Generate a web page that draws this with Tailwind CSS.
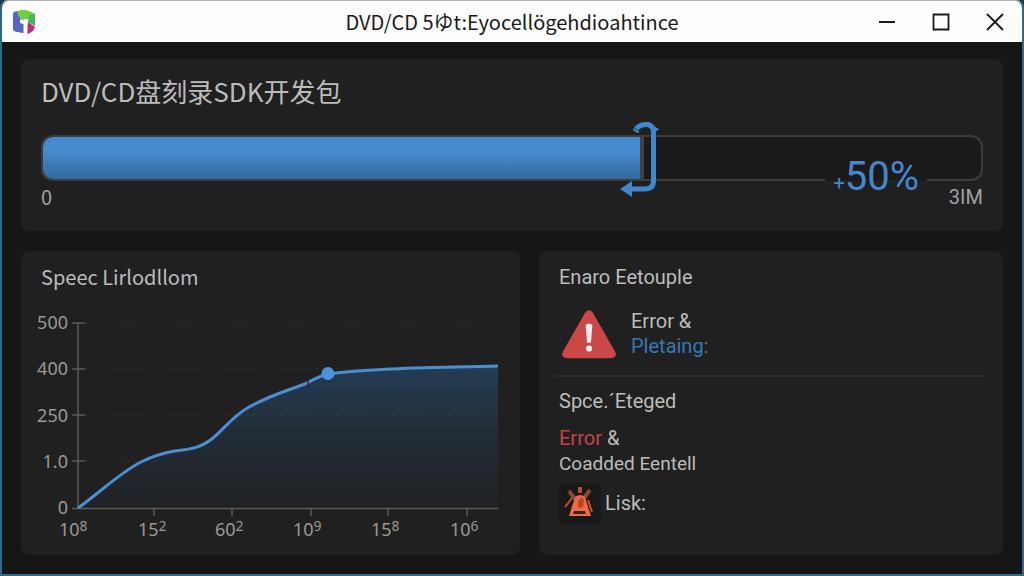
<!DOCTYPE html>
<html lang="zh-CN">
<head>
<meta charset="utf-8">
<meta name="viewport" content="width=device-width, initial-scale=1">
<title>DVD/CD SDK</title>
<script src="https://cdn.jsdelivr.net/npm/@tailwindcss/browser@4"></script>
</head>
<body class="bg-[#1c3c4c] font-['Noto_Sans_CJK_SC',sans-serif] text-[#bcbcbc]">
<div class="flex min-h-screen flex-col overflow-hidden rounded-t-lg border-x-2 border-t border-b-2 border-[#2e6a8c] border-t-[#a9b3b8] bg-[#161616]">
  <header class="relative flex h-[41px] shrink-0 items-center justify-between bg-[#fdfdfd] pl-2.5 text-[#1a1a1a]">
    <svg class="size-6" viewBox="0 0 24 24" aria-hidden="true">
      <path d="M3 1.500L9 .5l4 12v11L3 21.500Q1 20.500 1 19V4Q1 2 3 1.500Z" fill="#5a62c4"/>
      <path d="M5 1.500Q12-1 17 1L23 4v12l-7-7H8Z" fill="#6cd03a"/>
      <path d="M17 5l6-1v12l-7-4Z" fill="#48b45c"/>
      <path d="M16 12l7 5-2 4-5 3h-3Z" fill="#c02a7c"/>
      <path d="M8 9.500h7.500V24L11.500 24V14L8 13Z" fill="#fff"/>
    </svg>
    <h1 class="absolute inset-x-0 text-center text-[20px] leading-[40px]">DVD/CD 5ゆt:Eyocellögehdioahtince</h1>
    <div class="relative flex items-center">
      <button type="button" aria-label="Minimize" class="flex h-10 w-[54px] items-center justify-center"><svg class="size-5" viewBox="0 0 20 20" fill="none" stroke="currentColor" stroke-width="2"><path d="M2 10h16"/></svg></button>
      <button type="button" aria-label="Maximize" class="flex h-10 w-[54px] items-center justify-center"><svg class="size-5" viewBox="0 0 20 20" fill="none" stroke="currentColor" stroke-width="1.800"><path d="M2.500 2.500h15v15h-15z"/></svg></button>
      <button type="button" aria-label="Close" class="flex h-10 w-[54px] items-center justify-center"><svg class="size-5" viewBox="0 0 20 20" fill="none" stroke="currentColor" stroke-width="1.800"><path d="M2 2l16 16M18 2L2 18"/></svg></button>
    </div>
  </header>

  <main class="flex grow flex-col gap-5 px-[19px] pt-[17px] pb-[19px]">
    <section class="rounded-lg bg-[#202020] px-5 pt-4 pb-5">
      <h2 class="text-[26px] leading-8">DVD/CD盘刻录SDK开发包</h2>
      <div class="relative mt-7">
        <div role="progressbar" aria-label="Progress" aria-valuenow="50" aria-valuemin="0" aria-valuemax="100" class="flex h-[46px] overflow-hidden rounded-xl border-2 border-[#3c3c3c] bg-[#1a1a1a]">
          <div class="border-r-4 border-[#45423e] bg-linear-to-b from-[#468acf] from-35% to-[#34689f]" style="width:64.1%"></div>
        </div>
        <svg class="absolute -top-3.5 left-[61.500%] h-[78px] w-10" viewBox="0 0 40 78" aria-hidden="true">
          <path d="M16 8Q20 3.500 26 3.500h2Q33 5 33.500 10v50q0 8-9 8H12" fill="none" stroke="#4088cb" stroke-width="5"/>
          <path d="M13 7l7 4-3 1-4-3ZM30 3l9 5-5 4Z" fill="#4088cb"/>
          <path d="M0 68l12-8v16Z" fill="#4088cb"/>
        </svg>
        <div class="absolute top-6 right-14 flex items-baseline bg-linear-to-b from-[#1a1a1a] from-50% to-[#202020] to-50% px-2 font-['Roboto',sans-serif] text-[#4686cc]">
          <span class="text-[20px] leading-9">+</span><span class="text-[40px] leading-9">50%</span>
        </div>
      </div>
      <div class="mt-0.5 flex justify-between text-[20px] leading-7 text-[#a2a2a2]">
        <span>0</span><span class="font-['Roboto',sans-serif]">3IM</span>
      </div>
    </section>

    <div class="grid grow grid-cols-[499fr_464fr] gap-[19px]">
      <section class="rounded-lg bg-[#202020] px-4 pt-2.5">
        <h2 class="px-1 text-[20px] leading-8">Speec Lirlodllom</h2>
        <svg class="mt-4 w-full" viewBox="0 0 467 236" role="img" aria-label="Speed chart">
          <defs><linearGradient id="area" x1="0" y1="0" x2="0" y2="1"><stop offset="0" stop-color="#243c53"/><stop offset=".5" stop-color="#222c36"/><stop offset="1" stop-color="#202123"/></linearGradient></defs>
          <path d="M41 199C62 184 84 163 104 153C116 147 126 144 138 142C154 140 164 139 176 129C188 119 196 107 212 98C232 87 246 83 268 75C274 72 282 67 291 65C335 59 390 59 461 57V199Z" fill="url(#area)"/>
          <path d="M47 14H461M47 60H461M47 106H461M47 152H461" stroke="#ffffff" stroke-opacity=".06" stroke-dasharray="4 3"/>
          <path d="M41 14V199.500H461M35 14h13M35 60h13M35 106h13M35 152h13M35 199.500h6M117 199v8M195 199v8M274 199v8M351 199v8M430 199v8" fill="none" stroke="#5c5a57" stroke-width="1.500"/>
          <path d="M41 199C62 184 84 163 104 153C116 147 126 144 138 142C154 140 164 139 176 129C188 119 196 107 212 98C232 87 246 83 268 75C274 72 282 67 291 65C335 59 390 59 461 57" fill="none" stroke="#4b8fd2" stroke-width="3"/>
          <path d="M271 71v6" stroke="#202c36" stroke-width="1.500"/>
          <circle cx="291" cy="64.500" r="6.500" fill="#4a94dc"/>
          <g class="font-['Noto_Sans',sans-serif] text-[18px]" fill="#9b9895" text-anchor="end">
            <text x="31" y="20">500</text><text x="31" y="66">400</text><text x="31" y="113">250</text><text x="31" y="159">1.0</text><text x="31" y="205">0</text>
          </g>
          <g class="font-['Noto_Sans',sans-serif] text-[18px]" fill="#9b9895">
            <text x="22" y="227">10<tspan class="text-[14px]" dy="-5">8</tspan></text>
            <text x="101" y="227">15<tspan class="text-[14px]" dy="-5">2</tspan></text>
            <text x="178" y="227">60<tspan class="text-[14px]" dy="-5">2</tspan></text>
            <text x="256" y="227">10<tspan class="text-[14px]" dy="-5">9</tspan></text>
            <text x="334" y="227">15<tspan class="text-[14px]" dy="-5">8</tspan></text>
            <text x="413" y="227">10<tspan class="text-[14px]" dy="-5">6</tspan></text>
          </g>
        </svg>
      </section>

      <section class="rounded-lg bg-[#202020] px-4 pt-2.5 font-['Roboto',sans-serif] text-[20px]">
        <h2 class="px-1 leading-8">Enaro Eetouple</h2>
        <div class="mt-4 flex items-center gap-3.5 border-b-2 border-[#2e2e2e] pb-4 pl-1.5">
          <svg class="h-[50px] w-14" viewBox="0 0 58 50" aria-hidden="true">
            <path d="M25 3Q29-2 33 3L56 43Q59 50 51 50H7Q-1 50 2 43Z" fill="#cc4848"/>
            <path d="M25.500 16Q29 12 32.500 16L31 34h-4Z" fill="#f2eeee"/><circle cx="29" cy="40" r="3.200" fill="#f2eeee"/>
          </svg>
          <div class="leading-[25px]"><p>Error &amp;</p><a href="#" class="block text-[#3679b5]">Pletaing:</a></div>
        </div>
        <div class="px-1 pt-2">
          <h2 class="leading-8">Spce.´Eteged</h2>
          <p class="mt-2 leading-[26px]"><span class="text-[#c94343]">Error</span> &amp;</p>
          <p class="text-[19px] leading-[26px]">Coadded Eentell</p>
          <div class="mt-1.5 flex items-center gap-1">
            <svg class="h-10 w-[42px] rounded bg-[#191919]" viewBox="0 0 42 40" aria-hidden="true">
              <path d="M10 8l6 8M31 7l-6 8" stroke="#7d4c34" stroke-width="4"/>
              <path d="M13 15L6 24M29 17l4 12" stroke="#c6522f" stroke-width="2"/>
              <path d="M21 4v6" stroke="#b94b38" stroke-width="4"/>
              <path d="M16 14q5-4 10 0l6 19H10Z" fill="#ef6a40"/>
              <path d="M19 18l4-4 2 3-1 7-5 1Z" fill="#b8462d"/>
              <path d="M15 28h11l1 3H14Z" fill="#3a211a"/>
            </svg>
            <span>Lisk:</span>
          </div>
        </div>
      </section>
    </div>
  </main>
</div>
</body>
</html>
